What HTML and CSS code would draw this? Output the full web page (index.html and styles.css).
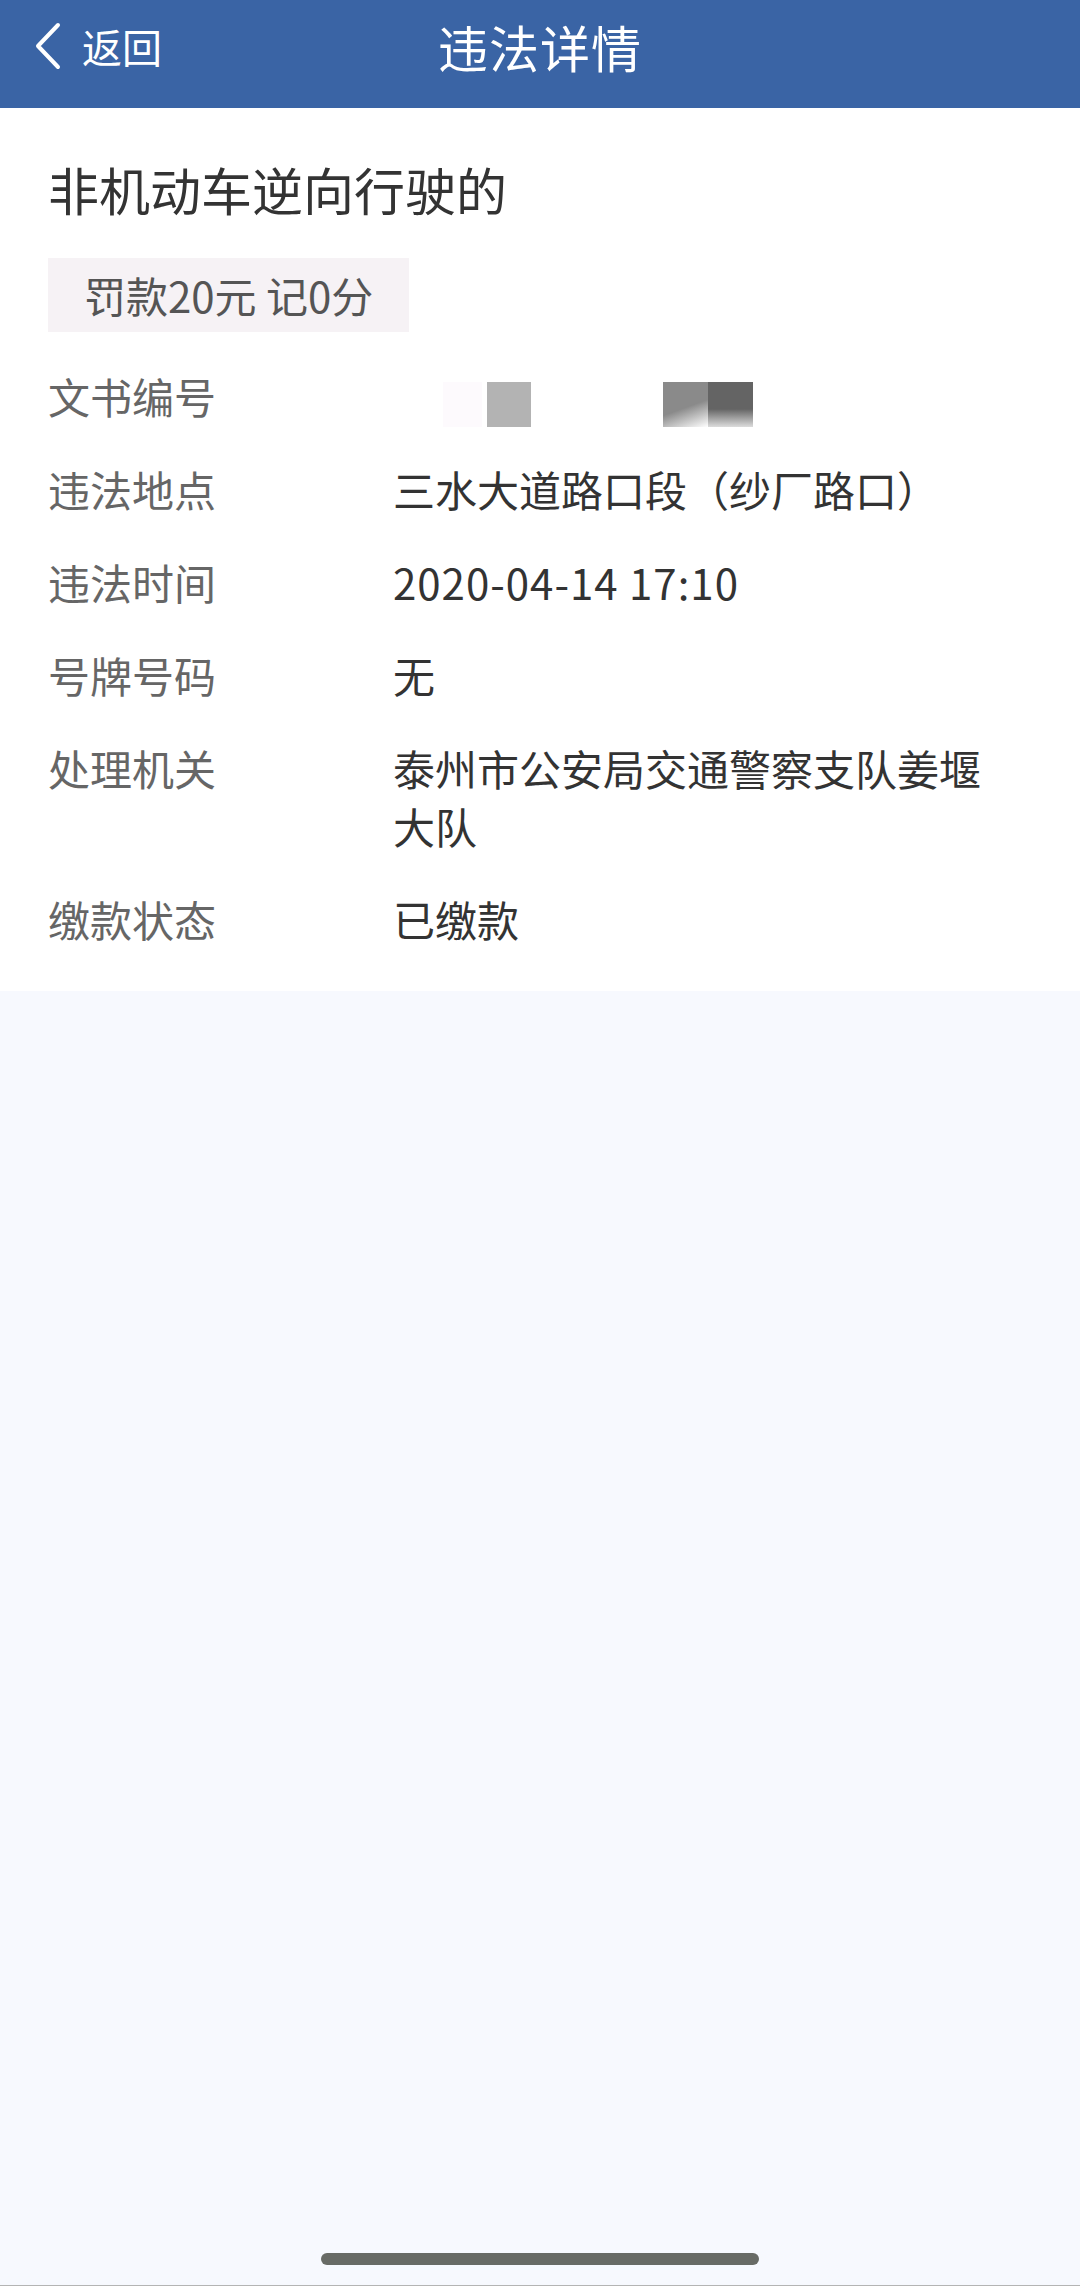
FILE: index.html
```html
<!DOCTYPE html>
<html lang="zh-CN">
<head>
  <meta charset="UTF-8">
  <title>违法详情</title>
  <link rel="stylesheet" href="styles.css">
</head>
<body>
  <div class="page">
    <!-- Top bar -->
    <div class="topbar">
      <div class="back">
        <svg class="back-icon" width="30" height="48" viewBox="0 0 30 48">
          <polyline points="25,3 5,24 25,45" fill="none" stroke="#fff" stroke-width="4" stroke-linecap="round" stroke-linejoin="round"/>
        </svg>
        <span>返回</span>
      </div>
      <div class="topbar-title">违法详情</div>
      <div></div>
    </div>

    <!-- Detail card -->
    <div class="card">
      <h1 class="card-title">非机动车逆向行驶的</h1>
      <div class="badge">罚款20元 记0分</div>

      <div class="rows">
        <div class="row">
          <div class="label">文书编号</div>
          <div class="value masked">
            <span class="mask mask-faint"></span>
            <span class="mask mask-light"></span>
            <span class="mask mask-fade"></span>
            <span class="mask mask-dark"></span>
          </div>
        </div>
        <div class="row">
          <div class="label">违法地点</div>
          <div class="value">三水大道路口段（纱厂路口）</div>
        </div>
        <div class="row">
          <div class="label">违法时间</div>
          <div class="value number">2020-04-14 17:10</div>
        </div>
        <div class="row">
          <div class="label">号牌号码</div>
          <div class="value">无</div>
        </div>
        <div class="row">
          <div class="label">处理机关</div>
          <div class="value">泰州市公安局交通警察支队姜堰大队</div>
        </div>
        <div class="row">
          <div class="label">缴款状态</div>
          <div class="value">已缴款</div>
        </div>
      </div>
    </div>

    <div class="filler"></div>

    <!-- Home indicator -->
    <div class="home-bar"><span></span></div>
  </div>
</body>
</html>
```

FILE: styles.css
```css
html, body { margin: 0; padding: 0; }
body { font-family: "Noto Sans CJK SC", "Noto Sans", sans-serif; background-color: #f7f9fe; color: #333; }
.page { height: 2286px; display: flex; flex-direction: column; box-sizing: border-box; border-bottom: 1px solid #b4b4b4; }

/* Top bar */
.topbar { height: 108px; box-sizing: border-box; padding: 0 33px 16px 33px; background-color: #3a64a5; color: #fff; display: grid; grid-template-columns: 1fr auto 1fr; align-items: center; }
.back { display: flex; align-items: center; font-size: 40px; line-height: 48px; }
.back-icon { display: block; margin-right: 19px; }
.topbar-title { font-size: 50px; line-height: 60px; letter-spacing: 1px; }

/* Card */
.card { background-color: #fff; padding: 51px 70px 43px 48px; }
.card-title { margin: 0; font-size: 51px; line-height: 60px; font-weight: normal; color: #333; }
.badge { display: inline-block; margin-top: 39px; padding: 0 36px; height: 74px; line-height: 74px; font-size: 42px; color: #555; background-color: #f6f2f5; }

.rows { display: flex; flex-direction: column; gap: 35px; margin-top: 35px; }
.row { display: grid; grid-template-columns: 345px 1fr; font-size: 42px; line-height: 58px; }
.label { color: #666; }
.value { color: #333; }
.number { letter-spacing: 1px; }

/* redacted document number */
.masked { display: flex; height: 58px; padding-left: 50px; }
.mask { display: block; height: 45px; margin-top: 15px; }
.mask-faint { width: 39px; background-color: #fdfafd; margin-right: 5px; }
.mask-light { width: 44px; background-color: #b3b3b3; margin-right: 132px; }
.mask-fade { width: 45px; background: linear-gradient(160deg, #8a8a8a 55%, #ffffff 100%); }
.mask-dark { width: 45px; background: linear-gradient(180deg, #646464 60%, #dcdcdc 100%); }

.filler { flex: 1; }

/* Home indicator */
.home-bar { display: flex; justify-content: center; padding-bottom: 20px; }
.home-bar span { display: block; width: 438px; height: 12px; border-radius: 6px; background-color: #686b66; }
```
